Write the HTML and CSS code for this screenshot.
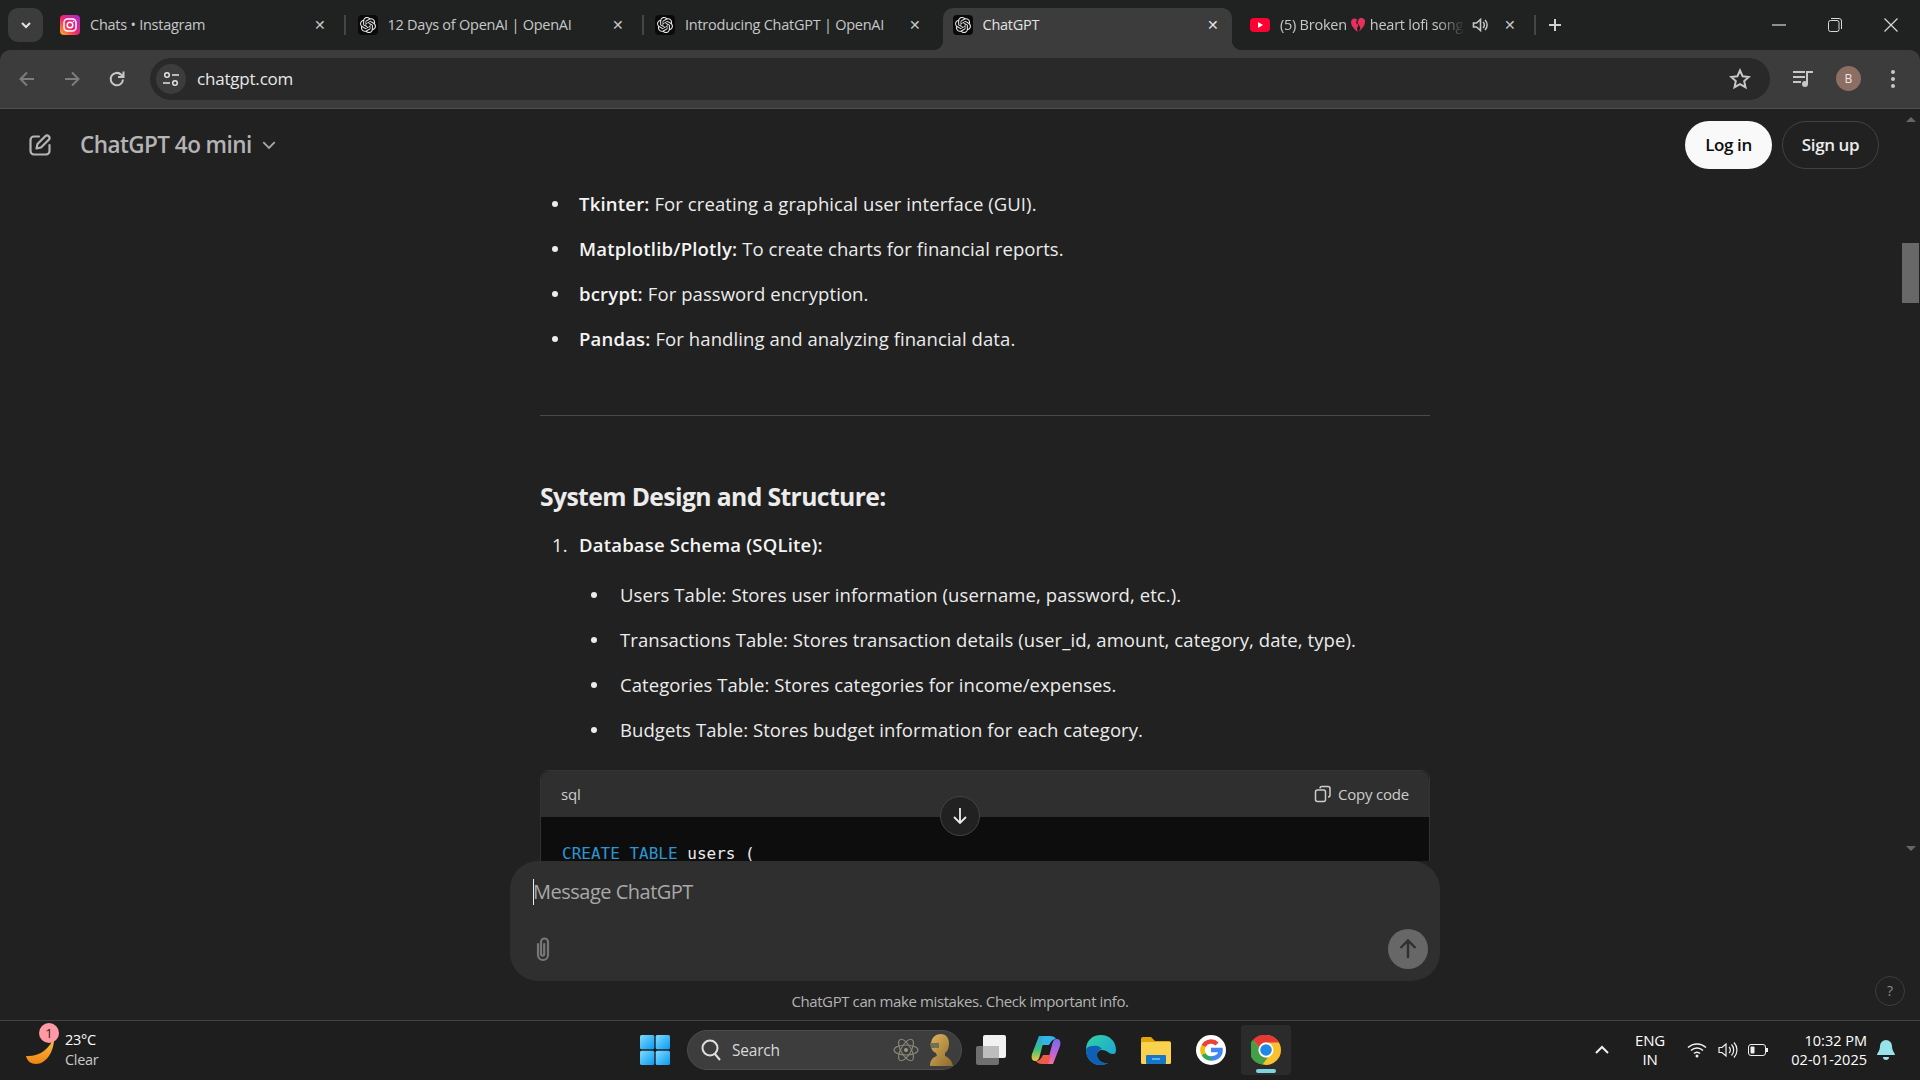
FILE: index.html
```html
<!DOCTYPE html>
<html lang="en">
    <head>
        <meta charset="UTF-8">
        <title>ChatGPT</title>
        <link rel="stylesheet" href="styles.css">
    </head>
    <body>
        <svg class="defs" width="0" height="0">
            <defs>
                <symbol id="openai" viewBox="0 0 24 24">
                    <path fill="#e8e8e8" d="M22.2819 9.8211a5.9847 5.9847 0 0 0-.5157-4.9108 6.0462 6.0462 0 0 0-6.5098-2.9A6.0651 6.0651 0 0 0 4.9807 4.1818a5.9847 5.9847 0 0 0-3.9977 2.9 6.0462 6.0462 0 0 0 .7427 7.0966 5.98 5.98 0 0 0 .511 4.9107 6.051 6.051 0 0 0 6.5146 2.9001A5.9847 5.9847 0 0 0 13.2599 24a6.0557 6.0557 0 0 0 5.7718-4.2058 5.9894 5.9894 0 0 0 3.9977-2.9001 6.0557 6.0557 0 0 0-.7475-7.0729zm-9.022 12.6081a4.4755 4.4755 0 0 1-2.8764-1.0408l.1419-.0804 4.7783-2.7582a.7948.7948 0 0 0 .3927-.6813v-6.7369l2.02 1.1686a.071.071 0 0 1 .038.052v5.5826a4.504 4.504 0 0 1-4.4945 4.4944zm-9.6607-4.1254a4.4708 4.4708 0 0 1-.5346-3.0137l.142.0852 4.783 2.7582a.7712.7712 0 0 0 .7806 0l5.8428-3.3685v2.3324a.0804.0804 0 0 1-.0332.0615L9.74 19.9502a4.4992 4.4992 0 0 1-6.1408-1.6464zM2.3408 7.8956a4.485 4.485 0 0 1 2.3655-1.9728V11.6a.7664.7664 0 0 0 .3879.6765l5.8144 3.3543-2.0201 1.1685a.0757.0757 0 0 1-.071 0l-4.8303-2.7865A4.504 4.504 0 0 1 2.3408 7.872zm16.5963 3.8558L13.1038 8.364 15.1192 7.2a.0757.0757 0 0 1 .071 0l4.8303 2.7913a4.4944 4.4944 0 0 1-.6765 8.1042v-5.6772a.79.79 0 0 0-.407-.667zm2.0107-3.0231l-.142-.0852-4.7735-2.7818a.7759.7759 0 0 0-.7854 0L9.409 9.2297V6.8974a.0662.0662 0 0 1 .0284-.0615l4.8303-2.7866a4.4992 4.4992 0 0 1 6.6802 4.66zM8.3065 12.863l-2.02-1.1638a.0804.0804 0 0 1-.038-.0567V6.0742a4.4992 4.4992 0 0 1 7.3757-3.4537l-.142.0805L8.704 5.459a.7948.7948 0 0 0-.3927.6813zm1.0976-2.3654l2.602-1.4998 2.6069 1.4998v2.9994l-2.5974 1.4997-2.6067-1.4997Z"/>
                </symbol>
                <linearGradient id="ig" x1="0" y1="1" x2="1" y2="0">
                    <stop offset="0" stop-color="#fdb41e"/>
                    <stop offset="0.45" stop-color="#f5266b"/>
                    <stop offset="1" stop-color="#a52bd8"/>
                </linearGradient>
                <linearGradient id="win" x1="0" y1="0" x2="1" y2="1">
                    <stop offset="0" stop-color="#7fdcfb"/>
                    <stop offset="1" stop-color="#0a99f5"/>
                </linearGradient>
                <linearGradient id="moon" x1="0" y1="0" x2="0" y2="1">
                    <stop offset="0" stop-color="#fbc64a"/>
                    <stop offset="1" stop-color="#ee8412"/>
                </linearGradient>
                <linearGradient id="edge" x1="0" y1="0" x2="1" y2="1">
                    <stop offset="0" stop-color="#2fd3a0"/>
                    <stop offset="1" stop-color="#1b9de2"/>
                </linearGradient>
                <linearGradient id="copilot" x1="0" y1="0" x2="0" y2="1">
                    <stop offset="0" stop-color="#2aa7e8"/>
                    <stop offset="0.55" stop-color="#3cc47c"/>
                    <stop offset="1" stop-color="#f6c63a"/>
                </linearGradient>
                <linearGradient id="copilot2" x1="0" y1="0" x2="0" y2="1">
                    <stop offset="0" stop-color="#7a6ae8"/>
                    <stop offset="0.6" stop-color="#c064d8"/>
                    <stop offset="1" stop-color="#f0709a"/>
                </linearGradient>
                <linearGradient id="bust" x1="0" y1="0" x2="1" y2="1">
                    <stop offset="0" stop-color="#e2b35c"/>
                    <stop offset="1" stop-color="#8a6a2c"/>
                </linearGradient>
            </defs>
        </svg>

        <!-- browser tabs -->
        <div class="tabstrip">
            <button class="tab-search">
                <svg width="14" height="14" viewBox="0 0 14 14"><path d="M3 5l4 4 4-4" fill="none" stroke="#e3e3e3" stroke-width="2"/></svg>
            </button>
            <div class="tab">
                <svg class="favicon" viewBox="0 0 20 20">
                    <rect width="20" height="20" rx="4" fill="url(#ig)"/>
                    <rect x="4" y="4" width="12" height="12" rx="3.5" fill="none" stroke="#fff" stroke-width="1.5"/>
                    <circle cx="10" cy="10" r="2.8" fill="none" stroke="#fff" stroke-width="1.5"/>
                    <circle cx="13.5" cy="6.5" r="0.8" fill="#fff"/>
                </svg>
                <span class="tab-title">Chats • Instagram</span>
                <span class="tab-close">✕</span>
            </div>
            <i class="tab-sep"></i>
            <div class="tab">
                <span class="gpt-favicon"><svg width="16" height="16"><use href="#openai"/></svg></span>
                <span class="tab-title">12 Days of OpenAI | OpenAI</span>
                <span class="tab-close">✕</span>
            </div>
            <i class="tab-sep"></i>
            <div class="tab">
                <span class="gpt-favicon"><svg width="16" height="16"><use href="#openai"/></svg></span>
                <span class="tab-title">Introducing ChatGPT | OpenAI</span>
                <span class="tab-close">✕</span>
            </div>
            <i class="tab-sep off"></i>
            <div class="tab active">
                <span class="gpt-favicon"><svg width="16" height="16"><use href="#openai"/></svg></span>
                <span class="tab-title">ChatGPT</span>
                <span class="tab-close">✕</span>
            </div>
            <i class="tab-sep off"></i>
            <div class="tab">
                <svg class="favicon" viewBox="0 0 20 20">
                    <rect y="3" width="20" height="14" rx="4" fill="#ff0033"/>
                    <path d="M8 7l5 3-5 3z" fill="#fff"/>
                </svg>
                <span class="tab-title fade">(5) Broken
                    <svg class="heart" width="16" height="16" viewBox="0 0 16 16"><path d="M7.500 15C3 11 1 8 1 5a3.600 3.600 0 0 1 6-2.600L6 6l2.500 2L7 11zM9 14.500l1.500-3.500L9 8l-1.500-2L8.500 2.400A3.600 3.600 0 0 1 15 5c0 3-2 6-6 9.500z" fill="#e8305f"/></svg>
                    heart lofi song</span>
                <svg class="tab-audio" width="18" height="18" viewBox="0 0 18 18"><path d="M2.500 7v4h3l4 3.500v-11L5.500 7z" fill="none" stroke="#c7c7c7" stroke-width="1.600"/><path d="M12 6a4 4 0 0 1 0 6M14 4a7 7 0 0 1 0 10" fill="none" stroke="#c7c7c7" stroke-width="1.500"/></svg>
                <span class="tab-close">✕</span>
            </div>
            <i class="tab-sep"></i>
            <svg class="new-tab" width="16" height="16" viewBox="0 0 16 16"><path d="M8 2v12M2 8h12" stroke="#d0d0d0" stroke-width="2"/></svg>
            <div class="window-controls">
                <svg width="14" height="14" viewBox="0 0 14 14"><path d="M0 7h14" stroke="#d8d8d8" stroke-width="1.200"/></svg>
                <svg width="14" height="14" viewBox="0 0 14 14"><rect x="0.500" y="2.500" width="10.500" height="11" rx="2" fill="none" stroke="#d8d8d8"/><path d="M3 .5h8a2.500 2.500 0 0 1 2.500 2.500v8" fill="none" stroke="#d8d8d8"/></svg>
                <svg width="14" height="14" viewBox="0 0 14 14"><path d="M.5.5l13 13M13.500.5l-13 13" stroke="#d8d8d8" stroke-width="1.200"/></svg>
            </div>
        </div>

        <!-- address bar -->
        <div class="toolbar">
            <svg class="nav-btn" width="20" height="20" viewBox="0 0 20 20"><path d="M17 10H4M10 3.500L3.500 10l6.500 6.500" fill="none" stroke="#7d7d7d" stroke-width="2"/></svg>
            <svg class="nav-btn" width="20" height="20" viewBox="0 0 20 20"><path d="M3 10h13M10 3.500l6.500 6.500-6.500 6.500" fill="none" stroke="#7d7d7d" stroke-width="2"/></svg>
            <svg class="nav-btn" width="20" height="20" viewBox="0 0 20 20"><path d="M16 10.500a6.200 6.200 0 1 1-1.700-4.700L16.500 8M16.500 2.500V8H11" fill="none" stroke="#c7c7c7" stroke-width="2"/></svg>
            <div class="omnibox">
                <span class="site-info">
                    <svg width="18" height="18" viewBox="0 0 18 18"><circle cx="5" cy="5" r="2.300" fill="none" stroke="#e3e3e3" stroke-width="1.500"/><path d="M10 5h7M1 13h7" stroke="#e3e3e3" stroke-width="1.500"/><circle cx="13" cy="13" r="2.300" fill="none" stroke="#e3e3e3" stroke-width="1.500"/></svg>
                </span>
                <span class="url">chatgpt.com</span>
                <svg class="star" width="22" height="22" viewBox="0 0 22 22"><path d="M11 2.500l2.600 5.700 6.200.7-4.600 4.200 1.300 6.100-5.500-3.100-5.500 3.100 1.300-6.100L2.200 8.900l6.200-.7z" fill="none" stroke="#c7c7c7" stroke-width="2"/></svg>
            </div>
            <svg class="media" width="22" height="20" viewBox="0 0 22 20"><path d="M1 3h12M1 8h12M1 13h8" stroke="#c7c7c7" stroke-width="2"/><path d="M15 15V3h6" fill="none" stroke="#c7c7c7" stroke-width="2"/><circle cx="13" cy="15" r="3" fill="#c7c7c7"/></svg>
            <span class="avatar">B</span>
            <svg class="dots" width="6" height="20" viewBox="0 0 6 20"><circle cx="3" cy="3" r="2" fill="#c7c7c7"/><circle cx="3" cy="10" r="2" fill="#c7c7c7"/><circle cx="3" cy="17" r="2" fill="#c7c7c7"/></svg>
        </div>

        <!-- page -->
        <div class="page">
            <main class="main">
                <header class="page-head">
                    <svg class="edit-icon" width="26" height="26" viewBox="0 0 26 26"><path d="M12 4.500H7A3.500 3.500 0 0 0 3.500 8v11A3.500 3.500 0 0 0 7 22.500h12a3.500 3.500 0 0 0 3.500-3.500v-6" fill="none" stroke="#b4b4b4" stroke-width="2.200" stroke-linecap="round"/><path d="M9.500 16.500l1-4.500 8-8a2.500 2.500 0 0 1 3.500 3.500l-8 8z" fill="none" stroke="#b4b4b4" stroke-width="2.200" stroke-linejoin="round"/></svg>
                    <span class="model">ChatGPT 4o mini</span>
                    <svg width="16" height="16" viewBox="0 0 14 14"><path d="M2 4.500l5 5 5-5" fill="none" stroke="#a8a8a8" stroke-width="1.600"/></svg>
                    <button class="btn-login">Log in</button>
                    <button class="btn-signup">Sign up</button>
                </header>

                <div class="chat">
                    <div class="thread">
                        <ul>
                            <li><b>Tkinter:</b> For creating a graphical user interface (GUI).</li>
                            <li><b>Matplotlib/Plotly:</b> To create charts for financial reports.</li>
                            <li><b>bcrypt:</b> For password encryption.</li>
                            <li><b>Pandas:</b> For handling and analyzing financial data.</li>
                        </ul>
                        <hr>
                        <h3>System Design and Structure:</h3>
                        <ol>
                            <li>
                                <b>Database Schema (SQLite):</b>
                                <ul class="nested">
                                    <li>Users Table: Stores user information (username, password, etc.).</li>
                                    <li>Transactions Table: Stores transaction details (user_id, amount, category, date, type).</li>
                                    <li>Categories Table: Stores categories for income/expenses.</li>
                                    <li>Budgets Table: Stores budget information for each category.</li>
                                </ul>
                            </li>
                        </ol>
                        <div class="code-block">
                            <div class="code-head">
                                <span>sql</span>
                                <span class="copy">
                                    <svg width="18" height="18" viewBox="0 0 18 18"><rect x="1.500" y="5" width="10" height="11.500" rx="2" fill="none" stroke="#cdcdcd" stroke-width="1.500"/><path d="M6 3.500A2 2 0 0 1 8 1.500h6a2 2 0 0 1 2 2V10a2 2 0 0 1-2 2" fill="none" stroke="#cdcdcd" stroke-width="1.500"/></svg>
                                    Copy code
                                </span>
                            </div>
                            <pre class="code-body"><span class="kw">CREATE</span> <span class="kw">TABLE</span> users (</pre>
                        </div>
                    </div>
                    <button class="scroll-down">
                        <svg width="20" height="20" viewBox="0 0 20 20"><path d="M10 2v15M4 11l6 6 6-6" fill="none" stroke="#ececec" stroke-width="1.800"/></svg>
                    </button>
                </div>

                <div class="composer">
                    <div class="composer-input"><i class="caret"></i>Message ChatGPT</div>
                    <div class="composer-foot">
                        <svg class="clip" width="24" height="28" viewBox="0 0 24 28"><path d="M7 9v11a5 5 0 0 0 10 0V7a3.500 3.500 0 0 0-7 0v12a1.600 1.600 0 0 0 3.200 0V9" fill="none" stroke="#777" stroke-width="2.200" stroke-linecap="round"/></svg>
                        <span class="send">
                            <svg width="22" height="24" viewBox="0 0 22 24"><path d="M11 21V4M3.500 11L11 3.500 18.500 11" fill="none" stroke="#2f2f2f" stroke-width="2.400"/></svg>
                        </span>
                    </div>
                </div>
                <p class="disclaimer">ChatGPT can make mistakes. Check important info.</p>
                <span class="help">?</span>
            </main>
            <aside class="scrollbar">
                <i class="arrow-up"></i>
                <i class="thumb"></i>
                <i class="arrow-down"></i>
            </aside>
        </div>

        <!-- windows taskbar -->
        <footer class="taskbar">
            <div class="weather">
                <svg class="moon" width="28" height="28" viewBox="0 0 28 28"><path d="M28 0c1 14-7 28-18 28C5 28 1 25 0 20c12 1 24-6 28-20z" fill="url(#moon)"/></svg>
                <span class="weather-badge">1</span>
                <div class="weather-text"><span>23°C</span><span class="dim">Clear</span></div>
            </div>
            <div class="apps">
                <svg class="start" width="30" height="30" viewBox="0 0 30 30">
                    <rect width="14.300" height="14.300" rx="1.500" fill="url(#win)"/><rect x="15.700" width="14.300" height="14.300" rx="1.500" fill="url(#win)"/>
                    <rect y="15.700" width="14.300" height="14.300" rx="1.500" fill="url(#win)"/><rect x="15.700" y="15.700" width="14.300" height="14.300" rx="1.500" fill="url(#win)"/>
                </svg>
                <div class="search-pill">
                    <svg width="22" height="24" viewBox="0 0 22 24"><circle cx="10" cy="10" r="7.500" fill="none" stroke="#e0e0e0" stroke-width="2"/><path d="M15 16l5 6" stroke="#e0e0e0" stroke-width="2"/></svg>
                    <span class="search-label">Search</span>
                    <svg class="atom" width="26" height="28" viewBox="0 0 26 28">
                        <g fill="none" stroke="#8a8a78" stroke-width="1.100"><ellipse cx="13" cy="14" rx="12" ry="5"/><ellipse cx="13" cy="14" rx="12" ry="5" transform="rotate(60 13 14)"/><ellipse cx="13" cy="14" rx="12" ry="5" transform="rotate(120 13 14)"/></g>
                        <circle cx="13" cy="14" r="2" fill="#9a9a80"/>
                    </svg>
                    <svg class="bust" width="26" height="34" viewBox="0 0 26 34">
                        <path d="M3 33c0-6 3-9 7-10l-1-3c-3-1-6-5-5-10C5 4 9 1 14 1c5 0 8 4 8 9 0 4-1 8-4 10l0 3c3 1 7 4 8 10z" fill="url(#bust)"/>
                        <path d="M3 10h9v5H4z" fill="#6c7355"/>
                    </svg>
                </div>
                <svg class="app" width="30" height="30" viewBox="0 0 30 30"><rect y="11" width="23" height="19" rx="2" fill="#6f6f6f"/><rect x="7" width="23" height="23" rx="2" fill="#f2f2f2"/><rect x="7" y="11" width="16" height="12" fill="#bdbdbd"/></svg>
                <svg class="app" width="30" height="30" viewBox="0 0 30 30">
                    <path d="M8 1h6l-5 19c-1 4-2 6-5 6-3 0-4-3-3-7z" fill="url(#copilot)"/>
                    <path d="M22 29h-6l5-19c1-4 2-6 5-6 3 0 4 3 3 7z" fill="url(#copilot2)"/>
                    <path d="M12 20h8l-2 7c-.5 1.500-1 2-2 2h-5c-3 0-5-1-6-3 3 0 5-2 7-6z" fill="#ee5a48"/>
                    <path d="M18 10h-8l2-7c.5-1.500 1-2 2-2h5c3 0 5 1 6 3-3 0-5 2-7 6z" fill="#34b4e6"/>
                </svg>
                <svg class="app" width="30" height="30" viewBox="0 0 30 30">
                    <path d="M15 0C6 0 0 6 0 15c0 9 7 15 14 15 3 0 6-1 8-2-6 1-11-3-11-8 0-3 2-5 5-5 6 0 6 4 11 4 2 0 3-1 3-4C30 6 23 0 15 0z" fill="url(#edge)"/>
                    <path d="M0 15c0 9 7 15 14 15 3 0 6-1 8-2-6 1-11-3-11-8 0-3 2-6 5-6-2-3-6-4-9-3-4 0-7 2-7 4z" fill="#0f5fb8"/>
                </svg>
                <svg class="app" width="30" height="30" viewBox="0 0 30 30">
                    <path d="M0 4a2 2 0 0 1 2-2h8l4 4h14a2 2 0 0 1 2 2v4H0z" fill="#e2a50e"/>
                    <rect y="7" width="30" height="22" rx="1.500" fill="#fbd24d"/>
                    <rect x="5" y="20" width="20" height="9" rx="1" fill="#1577c9"/>
                    <path d="M11 24h8" stroke="#7cc3ef" stroke-width="1.500"/>
                </svg>
                <svg class="app" width="30" height="30" viewBox="0 0 30 30">
                    <circle cx="15" cy="15" r="15" fill="#fff"/>
                    <path d="M15 15h9.500c.3 5-3.500 8.500-9.500 8.500" fill="none" stroke="#4285f4" stroke-width="4.500"/>
                    <path d="M15 23.500a8.500 8.500 0 0 1-7.500-4.500" fill="none" stroke="#34a853" stroke-width="4.500"/>
                    <path d="M7.500 19a8.500 8.500 0 0 1 0-8" fill="none" stroke="#fbbc05" stroke-width="4.500"/>
                    <path d="M7.500 11A8.500 8.500 0 0 1 21 9" fill="none" stroke="#ea4335" stroke-width="4.500"/>
                </svg>
                <div class="app-active">
                    <svg width="30" height="30" viewBox="0 0 30 30">
                        <circle cx="15" cy="15" r="15" fill="#fbc02d"/>
                        <path d="M15 0a15 15 0 0 1 13 7.500H15a7.500 7.500 0 0 0-7 5L2 4.800A15 15 0 0 1 15 0z" fill="#e53935"/>
                        <path d="M2 4.800A15 15 0 0 0 11.500 29.600l5.500-7.300a7.500 7.500 0 0 1-9-9.800z" fill="#43a047"/>
                        <circle cx="15" cy="15" r="7.500" fill="#fff"/>
                        <circle cx="15" cy="15" r="5.800" fill="#1e88e5"/>
                    </svg>
                    <i class="running"></i>
                </div>
            </div>
            <div class="tray">
                <svg width="16" height="10" viewBox="0 0 16 10"><path d="M2 8l6-6 6 6" fill="none" stroke="#f0f0f0" stroke-width="2"/></svg>
                <div class="lang"><span>ENG</span><span>IN</span></div>
                <svg class="tray-wifi" width="20" height="16" viewBox="0 0 20 16"><path d="M1 5.500a13 13 0 0 1 18 0M4 8.500a8.500 8.500 0 0 1 12 0M7 11.500a4 4 0 0 1 6 0" fill="none" stroke="#f0f0f0" stroke-width="1.500"/><circle cx="10" cy="14" r="1.500" fill="#f0f0f0"/></svg>
                <svg class="tray-vol" width="20" height="18" viewBox="0 0 20 18"><path d="M1 6.500v5h3l4 3.500V3L4 6.500z" fill="none" stroke="#f0f0f0" stroke-width="1.200"/><path d="M11 6a4 4 0 0 1 0 6M13.500 3.500a8 8 0 0 1 0 11M16 1.500a11 11 0 0 1 0 15" fill="none" stroke="#f0f0f0" stroke-width="1.200"/></svg>
                <svg class="tray-bat" width="20" height="12" viewBox="0 0 20 12"><rect x=".5" y=".5" width="17" height="11" rx="2.500" fill="none" stroke="#f0f0f0"/><rect x="2.500" y="2.500" width="4" height="7" rx="1" fill="#f0f0f0"/><rect x="18" y="4" width="2" height="4" fill="#f0f0f0"/></svg>
                <div class="clock"><span>10:32 PM</span><span>02-01-2025</span></div>
                <svg class="bell" width="18" height="20" viewBox="0 0 18 20"><path d="M9 0a6 6 0 0 1 6 6c0 5 3 7 3 9H0c0-2 3-4 3-9a6 6 0 0 1 6-6z" fill="#97e3ea"/><path d="M6 17h6a3 3 0 0 1-6 0z" fill="#97e3ea"/></svg>
            </div>
        </footer>
    </body>
</html>
```

FILE: styles.css
```css
* {
    box-sizing: border-box;
    margin: 0;
}

html, body {
    height: 100%;
}

body {
    display: flex;
    flex-direction: column;
    overflow: hidden;
    background-color: #212121;
    color: #ececec;
    font-family: "Open Sans", "Noto Sans", sans-serif;
}

button {
    font-family: inherit;
    border: 0;
    padding: 0;
}

.defs {
    position: absolute;
}

/* tab strip */
.tabstrip {
    display: flex;
    align-items: flex-end;
    flex: 0 0 50px;
    height: 50px;
    background-color: #202222;
    padding-left: 8px;
}

.tab-search {
    display: flex;
    align-items: center;
    justify-content: center;
    width: 35px;
    height: 34px;
    margin: 0 7px 8px 0;
    border-radius: 10px;
    background-color: #3c3c3c;
}

.tab {
    position: relative;
    display: flex;
    align-items: center;
    flex: 0 0 289px;
    height: 42px;
    padding: 0 9px 9px 10px;
    border-radius: 10px 10px 0 0;
    color: #c7c7c7;
    font-size: 14.5px;
    letter-spacing: -0.25px;
}

.tab.active {
    background-color: #3c3c3c;
    color: #e3e3e3;
}

.tab.active::before, .tab.active::after {
    content: "";
    position: absolute;
    bottom: 0;
    width: 10px;
    height: 10px;
}

.tab.active::before {
    left: -10px;
    background: radial-gradient(circle at 0 0, transparent 10px, #3c3c3c 10.5px);
}

.tab.active::after {
    right: -10px;
    background: radial-gradient(circle at 100% 0, transparent 10px, #3c3c3c 10.5px);
}

.favicon {
    flex: 0 0 20px;
    width: 20px;
    height: 20px;
}

.gpt-favicon {
    display: flex;
    align-items: center;
    justify-content: center;
    flex: 0 0 20px;
    height: 20px;
    border-radius: 4px;
    background-color: #0a0a0a;
}

.tab-title {
    flex: 1;
    margin-left: 10px;
    white-space: nowrap;
    overflow: hidden;
}

.tab-title.fade {
    -webkit-mask-image: linear-gradient(to right, #000 85%, transparent 100%);
}

.heart {
    vertical-align: -3px;
}

.tab-audio {
    margin: 0 11px 0 6px;
}

.tab-close {
    flex: 0 0 20px;
    text-align: center;
    font-size: 14px;
    line-height: 1;
}

.tab-sep {
    flex: 0 0 2px;
    height: 20px;
    margin: 0 1.5px 15px 5px;
    background-color: #444646;
}

.tab-sep.off {
    visibility: hidden;
}

.new-tab {
    margin: 0 0 17px 9px;
}

.window-controls {
    display: flex;
    gap: 42px;
    margin: 0 22px 18px auto;
}

/* toolbar */
.toolbar {
    display: flex;
    align-items: center;
    flex: 0 0 59px;
    height: 59px;
    padding: 0 0 1px 17px;
    border-top-left-radius: 10px;
    border-top-right-radius: 10px;
    border-bottom: 1px solid #4d4d4d;
    background-color: #3c3c3c;
}

.nav-btn {
    margin-right: 25px;
}

.omnibox {
    display: flex;
    align-items: center;
    width: 1620px;
    height: 42px;
    margin-left: -2px;
    padding: 0 19px 0 6px;
    border-radius: 21px;
    background-color: #292929;
}

.site-info {
    display: flex;
    align-items: center;
    justify-content: center;
    width: 30px;
    height: 30px;
    border-radius: 50%;
    background-color: #3c3c3c;
}

.url {
    margin-left: 11px;
    color: #e8e8e8;
    font-size: 17px;
    letter-spacing: -0.2px;
}

.star {
    margin-left: auto;
}

.media {
    margin-left: 22px;
}

.avatar {
    display: flex;
    align-items: center;
    justify-content: center;
    width: 25px;
    height: 25px;
    margin-left: 22px;
    border-radius: 50%;
    background-color: #8d6e63;
    color: #f0e6e2;
    font-size: 12px;
}

.dots {
    margin-left: 29px;
}

/* page */
.page {
    display: flex;
    flex: 1;
    min-height: 0;
    background-color: #212121;
}

.main {
    position: relative;
    display: flex;
    flex-direction: column;
    flex: 1;
    min-width: 0;
}

.page-head {
    display: flex;
    align-items: center;
    flex: 0 0 71px;
    padding: 0 22px 0 27px;
}

.edit-icon {
    margin-right: 27px;
}

.model {
    margin-right: 9px;
    color: #b4b4b4;
    font-size: 22.5px;
    font-weight: 600;
    letter-spacing: -0.55px;
}

.btn-login, .btn-signup {
    height: 48px;
    border-radius: 24px;
    font-size: 17px;
    font-weight: 600;
    letter-spacing: -0.4px;
}

.btn-login {
    width: 87px;
    margin-left: auto;
    background-color: #f9f9f9;
    color: #0d0d0d;
}

.btn-signup {
    width: 97px;
    margin-left: 10px;
    border: 1px solid #424242;
    background-color: transparent;
    color: #ececec;
}

.chat {
    position: relative;
    flex: 1;
    min-height: 0;
    overflow: hidden;
}

.thread {
    width: 890px;
    margin-left: 540px;
    padding-top: 8px;
    font-size: 18.5px;
    line-height: 31px;
    letter-spacing: 0.08px;
}

.thread ul, .thread ol {
    list-style: none;
    padding-left: 39px;
}

.thread li {
    position: relative;
    margin-bottom: 14px;
}

/* markers sit further from the text than the browser's own */
.thread ul > li::before {
    content: "";
    position: absolute;
    left: -27px;
    top: 13px;
    width: 6px;
    height: 6px;
    border-radius: 50%;
    background-color: #ececec;
}

.thread .nested > li::before {
    left: -29px;
}

.thread ol > li::before {
    content: "1.";
    position: absolute;
    left: -27px;
}

.thread b {
    font-weight: 600;
    color: #f4f4f4;
    letter-spacing: 0.2px;
}

.thread .nested {
    margin-top: 19px;
    padding-left: 41px;
}

.thread hr {
    margin: 61px 0 64px;
    border: 0;
    border-top: 1px solid #4a4a4a;
}

.thread h3 {
    margin-bottom: 16px;
    padding-top: 1px;
    font-size: 24.7px;
    font-weight: 700;
    line-height: 32px;
    letter-spacing: -0.6px;
}

.code-block {
    margin-top: 25px;
    border: 1px solid #333;
    border-radius: 8px;
    background-color: #0d0d0d;
}

.code-head {
    display: flex;
    align-items: center;
    justify-content: space-between;
    height: 46px;
    padding: 0 20px;
    border-radius: 8px 8px 0 0;
    background-color: #2f2f2f;
    color: #cdcdcd;
    font-size: 15px;
    letter-spacing: -0.2px;
}

.copy {
    display: flex;
    align-items: center;
    gap: 6px;
}

.code-body {
    padding: 25px 21px;
    color: #ececec;
    font-family: "DejaVu Sans Mono", "Liberation Mono", monospace;
    font-size: 16px;
    line-height: 24px;
    letter-spacing: 0;
}

.kw {
    color: #2e95d3;
}

.scroll-down {
    position: absolute;
    left: 940px;
    top: 616px;
    display: flex;
    align-items: center;
    justify-content: center;
    width: 40px;
    height: 40px;
    border: 1px solid #444;
    border-radius: 50%;
    background-color: #212121;
}

.composer {
    display: flex;
    flex-direction: column;
    justify-content: space-between;
    width: 930px;
    height: 120px;
    margin-left: 510px;
    padding: 16px 12px 12px 23px;
    border-radius: 28px;
    background-color: #2f2f2f;
}

.composer-input {
    position: relative;
    color: #a8a8a8;
    font-size: 20px;
    line-height: 30px;
    letter-spacing: -0.5px;
}

.caret {
    display: inline-block;
    width: 1px;
    height: 26px;
    margin-right: -1px;
    vertical-align: -6px;
    background-color: #ececec;
}

.composer-foot {
    display: flex;
    align-items: center;
    justify-content: space-between;
}

.clip {
    margin-left: -2px;
}

.send {
    display: flex;
    align-items: center;
    justify-content: center;
    width: 40px;
    height: 40px;
    border-radius: 50%;
    background-color: #676767;
}

.disclaimer {
    height: 39px;
    padding-left: 19px;
    color: #b4b4b4;
    font-size: 15px;
    line-height: 41px;
    letter-spacing: -0.4px;
    text-align: center;
}

.help {
    position: absolute;
    right: -4px;
    bottom: 14px;
    width: 30px;
    height: 30px;
    border: 1px solid #3d3d3d;
    border-radius: 50%;
    color: #8a8a8a;
    font-size: 14px;
    line-height: 28px;
    text-align: center;
}

.scrollbar {
    display: flex;
    flex-direction: column;
    align-items: center;
    flex: 0 0 19px;
    padding-top: 8px;
}

.arrow-up, .arrow-down {
    width: 0;
    height: 0;
    border-left: 5px solid transparent;
    border-right: 5px solid transparent;
}

.arrow-up {
    border-bottom: 5px solid #666;
}

.arrow-down {
    margin-top: 543px;
    border-top: 5px solid #666;
}

.thumb {
    width: 17px;
    height: 60px;
    margin-top: 121px;
    background-color: #686868;
}

/* taskbar */
.taskbar {
    display: flex;
    align-items: center;
    flex: 0 0 60px;
    height: 60px;
    padding-bottom: 2px;
    border-top: 1px solid #444;
    background-color: #1e1e1e;
    color: #fff;
}

.weather {
    position: relative;
    display: flex;
    align-items: center;
    flex: 0 0 640px;
    padding-left: 26px;
}

.weather-badge {
    position: absolute;
    left: 39px;
    top: -7px;
    width: 20px;
    height: 20px;
    border-radius: 50%;
    background-color: #ff9aa5;
    color: #222;
    font-size: 13px;
    line-height: 20px;
    text-align: center;
}

.weather-text {
    display: flex;
    flex-direction: column;
    margin-left: 11px;
    font-size: 14.5px;
    line-height: 20px;
    letter-spacing: -0.3px;
}

.dim {
    color: #c8c8c8;
}

.apps {
    display: flex;
    align-items: center;
}

.search-pill {
    display: flex;
    align-items: center;
    width: 275px;
    height: 40px;
    margin: 0 14px 0 17px;
    padding: 0 8px 0 12px;
    border: 1px solid #4c4c4c;
    border-radius: 20px;
    background-color: #3d3d3d;
}

.search-label {
    margin-left: 10px;
    color: #d8d8d8;
    font-size: 15.5px;
    letter-spacing: -0.2px;
}

.atom {
    margin-left: auto;
    margin-right: 8px;
}

.app {
    margin-right: 25px;
}

.app-active {
    position: relative;
    display: flex;
    align-items: center;
    justify-content: center;
    width: 50px;
    height: 50px;
    margin-left: -10px;
    border-radius: 4px;
    background-color: #2b2b2b;
}

.running {
    position: absolute;
    left: 15px;
    bottom: 2px;
    width: 20px;
    height: 4px;
    border-radius: 2px;
    background-color: #7fd3dc;
}

.tray {
    display: flex;
    align-items: center;
    margin-left: 303px;
}

.lang {
    display: flex;
    flex-direction: column;
    align-items: center;
    width: 36px;
    margin-left: 22px;
    font-size: 15px;
    line-height: 19px;
    letter-spacing: -0.2px;
}

.tray-wifi {
    margin-left: 19px;
}

.tray-vol {
    margin-left: 11px;
}

.tray-bat {
    margin-left: 10px;
}

.clock {
    display: flex;
    flex-direction: column;
    align-items: flex-end;
    width: 99px;
    font-size: 14.5px;
    line-height: 19px;
}

.bell {
    margin-left: 10px;
}
```
